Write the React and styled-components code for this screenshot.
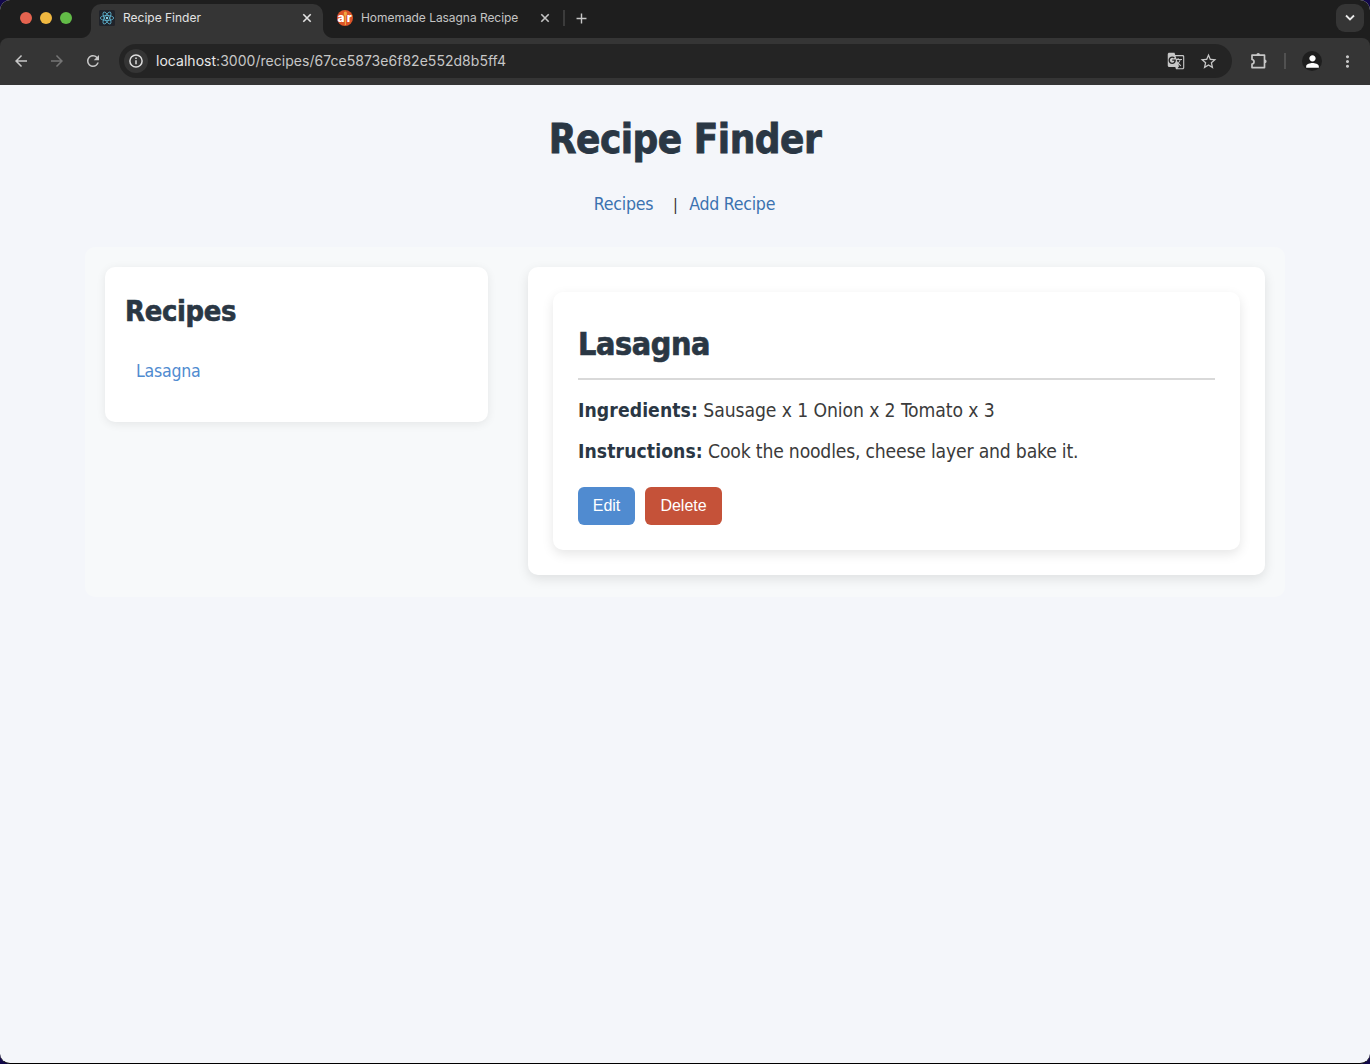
import React from 'react';
import styled, { createGlobalStyle } from 'styled-components';
import { MdArrowBack, MdArrowForward, MdRefresh, MdGTranslate, MdStarBorder, MdPerson, MdMoreVert, MdAdd } from 'react-icons/md';

const sans = '"DejaVu Sans Condensed", "DejaVu Sans", sans-serif';

const Global = createGlobalStyle`
  * { box-sizing: border-box; }
  body { margin: 0; background: #12084a; overflow: hidden; }
  h1, h2, p { margin: 0; }
`;

const Window = styled.div`
  display: flex;
  flex-direction: column;
  width: 1370px;
  height: 1064px;
  border-bottom: 1px solid #000;
  border-radius: 10px;
  overflow: hidden;
  background: #f4f6fa;
`;

const TabStrip = styled.div`
  display: flex;
  height: 38px;
  background: #1e1e1e;
  padding: 4px 6px 0 20px;
  font-family: Inter, sans-serif;
`;

const Lights = styled.div`
  display: flex;
  gap: 8px;
  padding-top: 8px;
  width: 71px;
`;

const Light = styled.i`
  width: 12px;
  height: 12px;
  border-radius: 50%;
  background: ${(p) => p.$color};
`;

const Tab = styled.div`
  position: relative;
  display: flex;
  align-items: center;
  width: ${(p) => p.$width}px;
  height: 34px;
  padding: 0 9px 6px ${(p) => (p.$active ? 8 : 14)}px;
  border-radius: 10px 10px 0 0;
  background: ${(p) => (p.$active ? '#353535' : 'transparent')};
  color: ${(p) => (p.$active ? '#e3e3e3' : '#c4c4c4')};

  &::before, &::after {
    content: ${(p) => (p.$active ? '""' : 'none')};
    position: absolute;
    bottom: 0;
    width: 10px;
    height: 10px;
  }
  &::before {
    left: -10px;
    background: radial-gradient(circle at 0 0, transparent 9.5px, #353535 10.5px);
  }
  &::after {
    right: -10px;
    background: radial-gradient(circle at 100% 0, transparent 9.5px, #353535 10.5px);
  }
`;

const TabTitle = styled.span`
  flex: 1;
  margin-left: 8px;
  font-size: 12px;
  line-height: 16px;
  white-space: nowrap;
  letter-spacing: ${(p) => p.$spacing}px;
`;

const TabDivider = styled.i`
  width: 2px;
  height: 16px;
  margin: 6px 8px 0 2px;
  background: #3b3b3b;
`;

const NewTab = styled.div`
  display: flex;
  flex: 1;
  padding-top: 6px;
  color: #c7c7c7;
`;

const TabSearch = styled.div`
  display: grid;
  place-items: center;
  width: 28px;
  height: 28px;
  border-radius: 9px;
  background: #353535;
`;

const ToolbarBack = styled.div`
  background: #1e1e1e;
`;

const Toolbar = styled.div`
  display: flex;
  align-items: center;
  height: 47px;
  padding: 0 0 1px 12px;
  border-radius: 8px 8px 0 0;
  background: #353535;
  color: #c7c7c7;
`;

const NavButton = styled.span`
  display: grid;
  place-items: center;
  width: 18px;
  height: 18px;
  margin-right: ${(p) => p.$gap}px;
  color: ${(p) => (p.$muted ? '#757575' : '#c7c7c7')};
`;

const AddressBar = styled.div`
  display: flex;
  flex: none;
  align-items: center;
  width: 1113px;
  height: 34px;
  padding: 0 15px 0 5px;
  border-radius: 17px;
  background: #242424;
  font: 14px/20px Inter, sans-serif;
  color: #c7c7c7;
`;

const SiteInfo = styled.span`
  display: grid;
  place-items: center;
  width: 24px;
  height: 24px;
  border-radius: 50%;
  background: #353535;
`;

const Url = styled.span`
  flex: 1;
  margin-left: 8px;
  letter-spacing: 0.03px;
`;

const Host = styled.span`
  color: #e8e8e8;
`;

const BarIcon = styled.span`
  display: grid;
  place-items: center;
  width: 18px;
  height: 18px;
  margin-left: 14px;
`;

const Extensions = styled.span`
  display: grid;
  flex: none;
  margin-left: 18px;
`;

const ToolbarDivider = styled.i`
  flex: none;
  width: 2px;
  height: 16px;
  margin: 0 16px 0 16px;
  background: #515151;
`;

const Avatar = styled.span`
  display: grid;
  flex: none;
  place-items: center;
  width: 20px;
  height: 20px;
  margin-right: 16px;
  border-radius: 50%;
  background: #1e1e1e;
  color: #fff;
`;

const MenuIcon = styled(MdMoreVert)`
  flex: none;
`;

const Page = styled.main`
  flex: 1;
  display: flex;
  flex-direction: column;
  align-items: center;
  padding-top: 30px;
  font-family: ${sans};
  color: #2a3744;
`;

const PageTitle = styled.h1`
  font-size: 40px;
  line-height: 48px;
  letter-spacing: -0.5px;
  -webkit-text-stroke: 0.8px currentColor;
`;

const Nav = styled.nav`
  display: flex;
  align-items: center;
  margin: 29px 0 32px;
  padding-right: 1px;
  height: 23px;
  font-size: 17.6px;
  letter-spacing: -0.25px;
  color: #333;
`;

const NavLink = styled.a`
  color: #3b72b0;
  white-space: nowrap;
`;

const Pipe = styled.span`
  margin: 2px 12px 0 20px;
  font-size: 16px;
  width: 4px;
  display: flex;
  justify-content: center;
`;

const Container = styled.div`
  display: flex;
  align-items: flex-start;
  gap: 40px;
  width: 1200px;
  height: 350px;
  padding: 20px;
  border-radius: 10px;
  background: #f7f9fa;
`;

const Card = styled.section`
  border-radius: 10px;
  background: #fff;
  box-shadow: 0 4px 12px rgba(0, 0, 0, 0.1);
`;

const Sidebar = styled(Card)`
  width: 383px;
  height: 155px;
  padding: 24px 20px;
  box-shadow: 0 2px 10px rgba(0, 0, 0, 0.08);
`;

const SidebarTitle = styled.h2`
  font-size: 28.8px;
  line-height: 40px;
  letter-spacing: -0.3px;
  -webkit-text-stroke: 0.6px currentColor;
`;

const RecipeLink = styled.a`
  display: block;
  margin: 28px 0 0 11px;
  font-size: 17.6px;
  line-height: 24px;
  letter-spacing: -0.25px;
  color: #4f8bd0;
`;

const DetailPanel = styled(Card)`
  width: 737px;
  height: 308px;
  padding: 25px;
`;

const Detail = styled(Card)`
  height: 258px;
  padding: 25px;
`;

const DetailTitle = styled.h2`
  height: 63px;
  padding-top: 7px;
  border-bottom: 2px solid #d9d9d9;
  font-size: 32px;
  line-height: 40px;
  letter-spacing: -0.4px;
  -webkit-text-stroke: 0.7px currentColor;
`;

const Line = styled.p`
  margin-top: ${(p) => p.$top}px;
  font-size: 19.2px;
  line-height: 31px;
  white-space: nowrap;
  letter-spacing: ${(p) => p.$spacing}px;
  color: #3b3b3b;
`;

const Label = styled.strong`
  color: #2a3744;
  letter-spacing: 0.08px;
`;

const Actions = styled.div`
  display: flex;
  gap: 10px;
  margin-top: 20px;
`;

const Button = styled.button`
  width: ${(p) => p.$width}px;
  height: 38px;
  padding: 0;
  border: 0;
  border-radius: 6px;
  background: ${(p) => p.$color};
  color: #fff;
  font: 16px/18px "Liberation Sans", Arial, sans-serif;
`;

const CloseIcon = () => (
  <svg width="14" height="14" viewBox="0 0 14 14" stroke="currentColor" strokeWidth="1.6">
    <path d="M3.3 3.3l7.4 7.4M10.7 3.3l-7.4 7.4" />
  </svg>
);

const ReactFavicon = () => (
  <svg width="16" height="16" viewBox="0 0 16 16" fill="none" stroke="#61b9d6" strokeWidth=".8">
    <rect width="16" height="16" rx="1.5" fill="#20232a" stroke="none" />
    <ellipse cx="8" cy="8" rx="6.7" ry="2.5" />
    <ellipse cx="8" cy="8" rx="6.7" ry="2.5" transform="rotate(60 8 8)" />
    <ellipse cx="8" cy="8" rx="6.7" ry="2.5" transform="rotate(120 8 8)" />
    <circle cx="8" cy="8" r="1.2" fill="#8ad4ea" stroke="none" />
  </svg>
);

const RecipesFavicon = () => (
  <svg width="16" height="16" viewBox="0 0 16 16">
    <circle cx="8" cy="8" r="8" fill="#dc5428" />
    <text x="0.4" y="11.8" fontFamily="Inter, sans-serif" fontSize="12" fontWeight="800" fill="#fff">a</text>
    <text x="9.8" y="11.8" fontFamily="Inter, sans-serif" fontSize="12" fontWeight="800" fill="#fff">r</text>
    <ellipse cx="8.4" cy="3.7" rx="1.6" ry="2.3" fill="#efa940" />
    <path d="M8.4 4v11" stroke="#efa940" strokeWidth="1.1" />
  </svg>
);

const InfoIcon = () => (
  <svg width="14" height="14" viewBox="0 0 14 14" fill="none" stroke="#dedede" strokeWidth="1.5">
    <circle cx="7" cy="7" r="6.1" />
    <path d="M7 6.2v4M7 3.6v1.5" />
  </svg>
);

const PuzzleIcon = () => (
  <svg width="18" height="18" viewBox="0 0 18 18" fill="none" stroke="#c7c7c7" strokeWidth="1.7" strokeLinejoin="round">
    <path d="M2 3.2h12.5v12.4H2v-3.6c2.7-.2 2.7-4.3 0-4.5z" />
    <path d="M6.4 2.9a1.8 1.8 0 0 1 3.6 0zM14.8 7.6a1.8 1.8 0 0 1 0 3.6z" fill="#c7c7c7" stroke="none" />
  </svg>
);

const ChevronIcon = () => (
  <svg width="10" height="8" viewBox="0 0 10 8" fill="none" stroke="#e8e8e8" strokeWidth="1.8">
    <path d="M1 1.5l4 4 4-4" />
  </svg>
);

export default function App() {
  return (
    <Window>
      <Global />
      <TabStrip>
        <Lights>
          <Light $color="#e5634f" />
          <Light $color="#f0b840" />
          <Light $color="#62bb47" />
        </Lights>
        <Tab $active $width={232}>
          <ReactFavicon />
          <TabTitle $spacing={0}>Recipe Finder</TabTitle>
          <CloseIcon />
        </Tab>
        <Tab $width={238}>
          <RecipesFavicon />
          <TabTitle $spacing={-0.05}>Homemade Lasagna Recipe</TabTitle>
          <CloseIcon />
        </Tab>
        <TabDivider />
        <NewTab><MdAdd size={17} /></NewTab>
        <TabSearch><ChevronIcon /></TabSearch>
      </TabStrip>
      <ToolbarBack>
        <Toolbar>
          <NavButton $gap={18}><MdArrowBack size={18} /></NavButton>
          <NavButton $gap={18} $muted><MdArrowForward size={18} /></NavButton>
          <NavButton $gap={17}><MdRefresh size={18} /></NavButton>
          <AddressBar>
            <SiteInfo><InfoIcon /></SiteInfo>
            <Url><Host>localhost</Host>:3000/recipes/67ce5873e6f82e552d8b5ff4</Url>
            <BarIcon><MdGTranslate size={18} /></BarIcon>
            <BarIcon><MdStarBorder size={19} /></BarIcon>
          </AddressBar>
          <Extensions><PuzzleIcon /></Extensions>
          <ToolbarDivider />
          <Avatar><MdPerson size={19} /></Avatar>
          <MenuIcon size={19} />
        </Toolbar>
      </ToolbarBack>
      <Page>
        <PageTitle>Recipe Finder</PageTitle>
        <Nav>
          <NavLink>Recipes</NavLink>
          <Pipe>|</Pipe>
          <NavLink>Add Recipe</NavLink>
        </Nav>
        <Container>
          <Sidebar>
            <SidebarTitle>Recipes</SidebarTitle>
            <RecipeLink>Lasagna</RecipeLink>
          </Sidebar>
          <DetailPanel>
            <Detail>
              <DetailTitle>Lasagna</DetailTitle>
              <Line $top={15} $spacing={-0.1}><Label>Ingredients:</Label> Sausage x 1 Onion x 2 Tomato x 3</Line>
              <Line $top={10} $spacing={-0.19}><Label>Instructions:</Label> Cook the noodles, cheese layer and bake it.</Line>
              <Actions>
                <Button $width={57} $color="#508bd0">Edit</Button>
                <Button $width={77} $color="#c55239">Delete</Button>
              </Actions>
            </Detail>
          </DetailPanel>
        </Container>
      </Page>
    </Window>
  );
}
